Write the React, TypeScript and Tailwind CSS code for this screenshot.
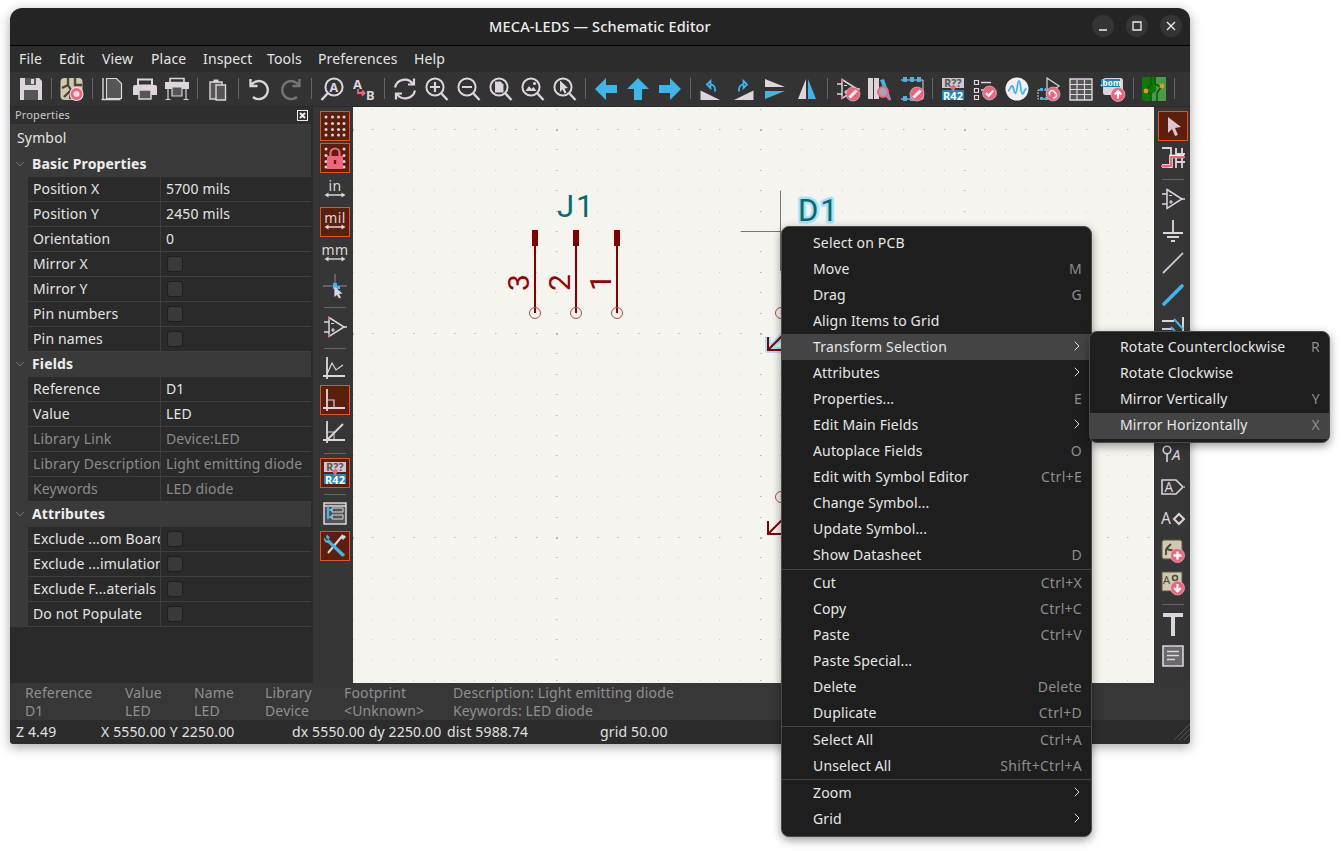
import React from 'react';
import { ChevronDown, ChevronRight } from 'lucide-react';

const L = '#ded4de';
const B = '#3eb6ea';
const P = '#f2637e';
const D = '#565656';

const Ico: React.FC<{ children: React.ReactNode }> = ({ children }) => (
  <svg width="24" height="24" viewBox="0 0 24 24" fill="none" className="shrink-0 overflow-visible">{children}</svg>
);

const Lens: React.FC<{ children?: React.ReactNode; flip?: boolean }> = ({ children, flip }) => (
  <Ico>
    <circle cx={flip ? 14 : 10} cy="10" r="8.6" stroke={L} strokeWidth="2" />
    <path d={flip ? 'M8 16L1.5 23' : 'M16 16L22.5 23'} stroke={L} strokeWidth="2.4" />
    {children}
  </Ico>
);

const Badge: React.FC<{ x?: number; y?: number; kind: 'pen' | 'check' | 'up' | 'link' | 'plus' | 'down' }> = ({ x = 17, y = 17, kind }) => (
  <g>
    <circle cx={x} cy={y} r="7" fill={P} stroke={L} strokeWidth="0.6" />
    {kind === 'pen' && <path d={`M${x - 3.5} ${y + 3.5}L${x + 3.5} ${y - 3.5}`} stroke="#fff" strokeWidth="3" />}
    {kind === 'check' && <path d={`M${x - 3.5} ${y}l2.6 2.8 4.6 -5`} stroke="#fff" strokeWidth="2.2" />}
    {kind === 'up' && <path d={`M${x} ${y + 4}v-7M${x - 3.4} ${y}l3.4 -3.4 3.4 3.4`} stroke="#fff" strokeWidth="2.2" />}
    {kind === 'down' && <path d={`M${x} ${y - 4}v7M${x - 3.4} ${y}l3.4 3.4 3.4 -3.4`} stroke="#fff" strokeWidth="2.2" />}
    {kind === 'plus' && <path d={`M${x - 4} ${y}h8M${x} ${y - 4}v8`} stroke="#fff" strokeWidth="2.4" />}
    {kind === 'link' && <path d={`M${x - 3} ${y + 1}a2.6 2.6 0 0 1 4 -3.4l2 2a2.6 2.6 0 0 1 -3 4`} stroke="#fff" strokeWidth="1.6" />}
  </g>
);

const OpAmp: React.FC<{ pink?: boolean }> = ({ pink }) => (
  <g stroke={L} strokeWidth="1.5">
    <path d="M6 2.5L21 12 6 21.5z" fill="none" />
    <path d="M1 7h5M1 17h5M21 12h3" />
    <path d="M8 8.5h3M8 15h4M10 13v4" strokeWidth="1.2" />
    {pink && <path d="M6 2v3M6 19v3" stroke={P} strokeWidth="1.6" />}
  </g>
);

const Anno = () => (
  <Ico>
    <rect x="1" y="1" width="22" height="10" fill="#cfc6cf" />
    <text x="12" y="10" fontSize="10.5" fontWeight="700" fill="#555" textAnchor="middle">R??</text>
    <rect x="1" y="13" width="22" height="10" fill="#1f87b8" />
    <text x="12" y="22.5" fontSize="11" fontWeight="700" fill="#fff" textAnchor="middle">R42</text>
    <path d="M8.5 9h7L12 15z" fill={P} />
  </Ico>
);

const top: Record<string, React.ReactNode> = {
  save: (
    <Ico>
      <path d="M1 1h19l3 3v19H1z" fill={L} />
      <rect x="6" y="1" width="11" height="7" fill={D} />
      <rect x="12" y="2" width="3" height="5" fill={L} />
      <rect x="5" y="13" width="14" height="10" fill={D} />
    </Ico>
  ),
  fields: (
    <Ico>
      <rect x="0.5" y="1" width="22" height="22" rx="4" fill="#d2c8ab" />
      <path d="M8 1v7l-6 3M8 8l3 5-7 7M15 1v7h7M11 13l-1 9" stroke="#4a4640" strokeWidth="2.4" />
      <circle cx="16.5" cy="17" r="7" fill="#e9e2e9" />
      <circle cx="16.5" cy="17" r="4.5" fill="none" stroke={P} strokeWidth="3" />
    </Ico>
  ),
  page: (
    <Ico>
      <path d="M5.5 1.5h10l5 5v15h-15z" fill={D} stroke={L} strokeWidth="1.2" />
      <path d="M2 1v21M.5 22.5h19" stroke={L} strokeWidth="1.4" />
    </Ico>
  ),
  print: (
    <Ico>
      <path d="M5 2.5h14v6H5z" stroke={L} strokeWidth="2" />
      <path d="M2 8h20a2 2 0 0 1 2 2v8h-24v-8a2 2 0 0 1 2 -2z" fill={L} />
      <path d="M6 13h12v9H6z" fill={D} stroke={L} strokeWidth="1.5" />
    </Ico>
  ),
  plot: (
    <Ico>
      <path d="M5 1.5h14v4H5z" stroke={L} strokeWidth="1.6" />
      <path d="M0 5h24v7H0z" fill={L} />
      <path d="M7 10h10v9H7z" fill={D} stroke={L} strokeWidth="1.2" />
      <path d="M3 12v10M21 12v10M0.5 22.5h5M18.5 22.5h5" stroke={L} strokeWidth="1.2" />
    </Ico>
  ),
  paste: (
    <Ico>
      <path d="M4 5h12v17H4z" fill={D} stroke={L} strokeWidth="1.4" />
      <path d="M7.5 2.5h5v3h-5z" fill={L} />
      <path d="M10 8h9.5v15H10z" fill={D} stroke={L} strokeWidth="1.4" />
    </Ico>
  ),
  undo: (
    <Ico>
      <path d="M3.5 2v7h7M4 8.5A9 9 0 1 1 6 20" stroke={L} strokeWidth="2.4" />
    </Ico>
  ),
  redo: (
    <Ico>
      <path d="M20.5 2v7h-7M20 8.5A9 9 0 1 0 18 20" stroke="#757575" strokeWidth="2.4" />
    </Ico>
  ),
  find: (
    <Lens flip>
      <text x="14" y="14.5" fontSize="12.5" fontWeight="700" fill={L} textAnchor="middle">A</text>
    </Lens>
  ),
  replace: (
    <Ico>
      <text x="1" y="12" fontSize="13" fontWeight="700" fill={L}>A</text>
      <text x="14" y="23" fontSize="13" fontWeight="700" fill={L}>B</text>
      <path d="M6 12v4h6M10 13.5l2.500 2.500-2.500 2.500" stroke={P} strokeWidth="1.8" />
    </Ico>
  ),
  refresh: (
    <Ico>
      <path d="M2 10.5A10 10 0 0 1 20 7M21 1.5v6h-6M22 13.5A10 10 0 0 1 4 17M3 22.5v-6h6" stroke={L} strokeWidth="2.2" />
    </Ico>
  ),
  zoomin: <Lens><path d="M5 10h10M10 5v10" stroke={L} strokeWidth="2.2" /></Lens>,
  zoomout: <Lens><path d="M5 10h10" stroke={L} strokeWidth="2.2" /></Lens>,
  zoomfit: <Lens><path d="M6 4.5h5.5l3 3v8H6z" fill={L} /></Lens>,
  zoomobj: <Lens><path d="M4.5 14l3.5 -5 2.5 3 2 -2 3 4z" fill={L} /><circle cx="13.5" cy="6.5" r="1.6" fill={L} /></Lens>,
  zoomsel: <Lens><path d="M7 3.5L15 11l-3.5 .5 2 4-2 1-2-4L7 15z" fill={L} /></Lens>,
  left: <Ico><path d="M1 12L12 1v7h11v8H12v7z" fill={B} /></Ico>,
  up: <Ico><path d="M12 1l11 11h-7v11H8V12H1z" fill={B} /></Ico>,
  right: <Ico><path d="M23 12L12 1v7H1v8h11v7z" fill={B} /></Ico>,
  rotccw: (
    <Ico>
      <path d="M1.500 13.500L21 23H1.500z" fill={L} />
      <path d="M8 7.500l3.500 -3.500v7zM11 7.500a4.500 4.500 0 0 1 5 5v2" stroke={B} strokeWidth="1.800" />
    </Ico>
  ),
  rotcw: (
    <Ico>
      <path d="M22.500 13.500V23H3z" fill={L} />
      <path d="M16 7.500L12.500 4v7zM13 7.500a4.500 4.500 0 0 0 -5 5v2" stroke={B} strokeWidth="1.800" />
    </Ico>
  ),
  mirv: (
    <Ico>
      <path d="M2 2l20 8H2z" fill={L} />
      <path d="M2 22l20-8H2z" fill={B} />
    </Ico>
  ),
  mirh: (
    <Ico>
      <path d="M11 2L3 22h8z" fill={L} />
      <path d="M13 2l8 20h-8z" fill={B} />
    </Ico>
  ),
  symedit: <Ico><OpAmp pink /><Badge kind="pen" /></Ico>,
  libbrowse: (
    <Ico>
      <path d="M0 1h5v21H0zM6 1h5v21H6z" fill={L} />
      <path d="M12 3l4 -1 7 20-3 1z" fill={B} />
      <circle cx="15" cy="15" r="5" fill="#a9a4a9" stroke={P} strokeWidth="2" />
      <path d="M18.5 19l4 4" stroke={P} strokeWidth="2" />
    </Ico>
  ),
  hierbus: (
    <Ico>
      <path d="M1 3h22v19H1" stroke={L} strokeWidth="1" />
      <path d="M3 0h4v5H3zM10 0h4v5h-4zM17 0h4v5h-4zM3 19h4v5H3zM10 19h4v5h-4z" fill={B} />
      <Badge kind="pen" />
    </Ico>
  ),
  annotate: <Anno />,
  erc: (
    <Ico>
      <path d="M1.5 3.5h4v4h-4zM1.5 11.5h4v4h-4zM1.5 18.5h4v4h-4z" stroke={L} strokeWidth="1.2" />
      <path d="M8 5.5h10M8 13h4" stroke={L} strokeWidth="1.4" />
      <Badge kind="check" y={16} x={16.5} />
    </Ico>
  ),
  sim: (
    <Ico>
      <circle cx="12" cy="12" r="11.5" fill="#f2f0f2" />
      <path d="M3 14c2 0 2-5 4-5s1.5 7 3.5 7 1.5-12 3.500-12 1.500 13 3.500 13 1-5 4-5" stroke={B} strokeWidth="1.8" />
    </Ico>
  ),
  assign: (
    <Ico>
      <path d="M10 1l12 8-12 8z" stroke={L} strokeWidth="1.2" />
      <path d="M1 13h14v9H1z" stroke={L} strokeWidth="1" strokeDasharray="2 1" />
      <path d="M3 11h3v3H3zM8 11h3v3H8zM3 20h3v3H3zM8 20h3v3H8z" fill={B} />
      <Badge kind="link" x={16} y={17} />
    </Ico>
  ),
  table: (
    <Ico>
      <path d="M1 2h22v21H1z" fill={D} stroke={L} strokeWidth="1.4" />
      <path d="M1 7.500h22M1 12.500h22M1 17.500h22M8 3v20M15.500 3v20" stroke={L} strokeWidth="1.2" />
    </Ico>
  ),
  bom: (
    <Ico>
      <rect x="2" y="1" width="20" height="17" rx="2.500" fill={L} />
      <rect x="0" y="2" width="19" height="8" fill="#1f87b8" />
      <text x="9.500" y="8.800" fontSize="8" fontWeight="700" fill="#fff" textAnchor="middle">.bom</text>
      <Badge kind="up" y={17.500} />
    </Ico>
  ),
  pcb: (
    <Ico>
      <rect x="0" y="0" width="24" height="24" rx="2.500" fill="#0a7a0a" />
      <path d="M14 0h10v24H10l-2-6 6-4z" fill="#4b9a48" />
      <path d="M9 0v8l-5 6M13 0v7l6 3M4 14l5 3v7M15 24v-8l4-6" stroke="#0c5a0c" strokeWidth="1.6" />
      <circle cx="4" cy="14" r="2.400" fill="#e39a1f" />
      <circle cx="20" cy="9" r="2.400" fill="#e39a1f" />
    </Ico>
  ),
};

const toolbar: string[][] = [
  ['save'], ['fields'], ['page', 'print', 'plot'], ['paste'], ['undo', 'redo'], ['find', 'replace'],
  ['refresh', 'zoomin', 'zoomout', 'zoomfit', 'zoomobj', 'zoomsel'], ['left', 'up', 'right'],
  ['rotccw', 'rotcw', 'mirv', 'mirh'], ['symedit', 'libbrowse', 'hierbus'],
  ['annotate', 'erc', 'sim', 'assign', 'table', 'bom'], ['pcb'],
];

const menus = [
  ['File', 'w-[40px]'], ['Edit', 'w-[43px]'], ['View', 'w-[49px]'], ['Place', 'w-[52px]'],
  ['Inspect', 'w-[64px]'], ['Tools', 'w-[51px]'], ['Preferences', 'w-[96px]'], ['Help', 'w-[50px]'],
];

const Tool: React.FC<{ on?: boolean; children?: React.ReactNode }> = ({ on, children }) => (
  <div className={`w-[30px] h-[30px] mb-[2px] flex items-center justify-center border ${on ? 'bg-[#5b1f0b] border-[#e4531f]' : 'border-transparent'}`}>
    {children}
  </div>
);

const VSep = () => (
  <div className="h-[9px] w-[30px] flex items-center justify-center">
    <div className="w-[22px] h-px bg-[#666]" />
  </div>
);

const Unit: React.FC<{ t: string }> = ({ t }) => (
  <Ico>
    <text x="12" y="12.500" fontSize="14" letterSpacing="0.4" fill={L} textAnchor="middle">{t}</text>
    <path d="M4 17h16" stroke={L} strokeWidth="1.400" />
    <path d="M1.500 17l4-2.500v5zM22.500 17l-4-2.500v5z" fill={L} />
  </Ico>
);

const LeftBar = () => (
  <div className="w-[40px] bg-[#363636] flex flex-col items-center pt-[4px] pl-[4px] shrink-0">
    <Tool on>
      <Ico>
        {[3, 9.500, 15.500, 21].map((y) => [3, 9.500, 15.500, 21].map((x) => <circle key={`${x}-${y}`} cx={x} cy={y} r="1.500" fill={L} />))}
      </Ico>
    </Tool>
    <Tool on>
      <Ico>
        {[3, 21].map((x) => [3, 9.500, 15.500, 21].map((y) => <circle key={`${x}-${y}`} cx={x} cy={y} r="1.500" fill={L} />))}
        <path d="M7.500 10V7a4.500 4.500 0 0 1 9 0v3" stroke={P} strokeWidth="2.200" />
        <path d="M4 10h16v13H4z" fill={P} />
        <path d="M12 14v4" stroke="#5b1f0b" strokeWidth="2.400" />
      </Ico>
    </Tool>
    <Tool><Unit t="in" /></Tool>
    <Tool on><Unit t="mil" /></Tool>
    <Tool><Unit t="mm" /></Tool>
    <Tool>
      <Ico>
        <path d="M12 0v22M0 12h24" stroke="#8f8a8f" strokeWidth="1" />
        <path d="M10 9h4v3h3v3h-3v0h-4v-3H7V12h3z" fill={B} />
        <path d="M11.500 12.500l8 7-3.500 .5 2 3.500-2 1-2-3.500-2.500 2z" fill={L} />
      </Ico>
    </Tool>
    <VSep />
    <Tool><Ico><OpAmp pink /></Ico></Tool>
    <VSep />
    <Tool>
      <Ico>
        <path d="M4 1v22M0 20h22" stroke={L} strokeWidth="1.800" />
        <path d="M4 18L9 7l4 7 7-5" stroke={L} strokeWidth="1.200" />
      </Ico>
    </Tool>
    <Tool on>
      <Ico>
        <path d="M4 1v22M0 20h22" stroke={L} strokeWidth="1.800" />
        <path d="M4 12h7v8" stroke={L} strokeWidth="1.200" />
      </Ico>
    </Tool>
    <Tool>
      <Ico>
        <path d="M4 1v22M0 20h22M3 21L20 4" stroke={L} strokeWidth="1.800" />
        <path d="M4 12h7v8" stroke={L} strokeWidth="1" />
      </Ico>
    </Tool>
    <VSep />
    <Tool on><Anno /></Tool>
    <VSep />
    <Tool>
      <Ico>
        <path d="M1 1h22v21H1z" stroke={L} strokeWidth="1.500" fill={D} />
        <path d="M1 4h22" stroke={L} strokeWidth="1.500" />
        <path d="M5 4v13M5 8h4M5 15h4" stroke={B} strokeWidth="2" />
        <path d="M9 6h11v4H9zM9 13h11v4H9z" stroke={L} strokeWidth="1" />
      </Ico>
    </Tool>
    <Tool on>
      <Ico>
        <path d="M20 1L5 19" stroke={L} strokeWidth="2" />
        <path d="M23 3l-3 3-2-2 3-3z" fill={L} />
        <path d="M3 2.500c0 1.500 1 2.500 3 3l1 1 15 14c-.5 1.500-1.500 2-3 2L5 9C2 9 .5 6 1 3.500l3 3 3-3-3-3z" fill={B} />
      </Ico>
    </Tool>
  </div>
);

const RightBar = () => (
  <div className="w-[36px] bg-[#363636] flex flex-col items-center pt-[4px] pl-[2px] shrink-0">
    <Tool on>
      <Ico><path d="M7 3l13 10-6 1 3 7-3 1-3-7-4 4z" fill="#d9c4cf" /></Ico>
    </Tool>
    <Tool>
      <Ico>
        <path d="M1 2h9v20M15 2v20M21 2v20M15 8h9M15 16h9" stroke={L} strokeWidth="1.800" />
        <path d="M1 20h9v-9.500h13" stroke="#fff" strokeWidth="3.500" />
        <path d="M0 20h10v-9h14" stroke={P} strokeWidth="2.200" />
      </Ico>
    </Tool>
    <VSep />
    <Tool><Ico><OpAmp /></Ico></Tool>
    <Tool>
      <Ico>
        <path d="M12 1v13M2 14h20M6 18h12M10 22h4" stroke={L} strokeWidth="1.800" />
      </Ico>
    </Tool>
    <Tool><Ico><path d="M2 22L22 2" stroke="#cdc2cd" strokeWidth="1.800" /></Ico></Tool>
    <Tool><Ico><path d="M3 21L21 3" stroke={B} strokeWidth="3.600" strokeLinecap="round" /></Ico></Tool>
    <Tool>
      <Ico>
        <path d="M1 6h12M1 14h12M22 2v20" stroke={L} strokeWidth="2" />
        <path d="M13 4l9 10M10 12l9 10" stroke={B} strokeWidth="2" />
      </Ico>
    </Tool>
    <Tool />
    <Tool />
    <Tool />
    <Tool>
      <Ico>
        <circle cx="6" cy="7" r="3.800" stroke={L} strokeWidth="1.600" />
        <path d="M6 11v8" stroke={L} strokeWidth="1.600" />
        <text x="11" y="17" fontSize="15" fontStyle="italic" fill={L}>A</text>
      </Ico>
    </Tool>
    <Tool>
      <Ico>
        <path d="M1 5h14l7 7-7 7H1z" stroke={L} strokeWidth="1.600" />
        <text x="3.500" y="17" fontSize="13.500" fill={L}>A</text>
        <path d="M22 11h2v2h-2z" fill={B} />
      </Ico>
    </Tool>
    <Tool>
      <Ico>
        <text x="0" y="17" fontSize="15.500" fill={L}>A</text>
        <path d="M18 7l5 5-5 5-5-5z" stroke={L} strokeWidth="2" />
      </Ico>
    </Tool>
    <Tool>
      <Ico>
        <rect x="1" y="1" width="20" height="19" rx="2" fill="#d2c8ab" stroke="#5a5650" />
        <path d="M5 10l5-5M5 10v6M5 10l9 2" stroke="#4a4640" strokeWidth="1.800" />
        <Badge kind="plus" y={16.500} x={16.500} />
      </Ico>
    </Tool>
    <Tool>
      <Ico>
        <rect x="1" y="1" width="20" height="19" fill="#d2c8ab" stroke="#5a5650" />
        <text x="2" y="13" fontSize="11" fill="#4a4640">A</text>
        <circle cx="14" cy="7" r="2.500" stroke="#4a4640" strokeWidth="1.500" />
        <Badge kind="down" y={17} x={16.500} />
      </Ico>
    </Tool>
    <VSep />
    <Tool>
      <Ico><path d="M2 1h20v4h-8v19h-4V5H2z" fill={L} /></Ico>
    </Tool>
    <Tool>
      <Ico>
        <path d="M2 2h20v20H2z" stroke={L} strokeWidth="1.600" fill="#6a6a6a" />
        <path d="M6 7.500h12M6 11.500h12M6 15.500h8" stroke={L} strokeWidth="1.500" />
      </Ico>
    </Tool>
  </div>
);

const Cat: React.FC<{ t: string }> = ({ t }) => (
  <div className="h-[25px] flex items-center pb-[2px] bg-[#3a3a3a] text-[#eee] font-bold">
    <div className="w-[14px] flex justify-end"><ChevronDown size={14} strokeWidth={1} className="text-[#aaa] mr-[-3px]" /></div>
    <span className="ml-[8px]">{t}</span>
  </div>
);

const Row: React.FC<{ k: string; v?: string; box?: boolean; dim?: boolean }> = ({ k, v, box, dim }) => (
  <div className={`h-[25px] flex ${dim ? 'text-[#8b8b8b]' : 'text-[#e4e4e4]'}`}>
    <div className="w-[18px] bg-[#3a3a3a] shrink-0" />
    <div className="w-[133px] shrink-0 flex items-center pb-[2px] pl-[5px] overflow-hidden whitespace-nowrap border-r border-b border-[#3e3e3e]">{k}</div>
    <div className={`flex-1 flex items-center pl-[5px] border-b border-[#3e3e3e] ${box ? '' : 'pb-[2px]'}`}>
      {box ? <div className="w-[16px] h-[16px] ml-[1px] rounded-[3px] bg-[#393939] border border-[#1e1e1e]" /> : v}
    </div>
  </div>
);

const PropsPanel = () => (
  <div className="w-[303px] bg-[#2a2a2a] shrink-0 pr-[2px] flex flex-col">
    <div className="h-[17px] flex items-center justify-between pl-[5px] pr-[3px] text-[11px] text-[#c8c8c8] bg-[#2e2e2e]">
      Properties
      <svg width="11" height="11" viewBox="0 0 11 11"><rect x=".5" y=".5" width="10" height="10" fill="none" stroke="#eee" /><path d="M3 3l5 5M8 3l-5 5" stroke="#eee" strokeWidth="2" /></svg>
    </div>
    <div className="h-[28px] flex items-center pb-[2px] pl-[7px] bg-[#3a3a3a] text-[#e4e4e4]">Symbol</div>
    <Cat t="Basic Properties" />
    <Row k="Position X" v="5700 mils" />
    <Row k="Position Y" v="2450 mils" />
    <Row k="Orientation" v="0" />
    <Row k="Mirror X" box />
    <Row k="Mirror Y" box />
    <Row k="Pin numbers" box />
    <Row k="Pin names" box />
    <Cat t="Fields" />
    <Row k="Reference" v="D1" />
    <Row k="Value" v="LED" />
    <Row k="Library Link" v="Device:LED" dim />
    <Row k="Library Description" v="Light emitting diode" dim />
    <Row k="Keywords" v="LED diode" dim />
    <Cat t="Attributes" />
    <Row k="Exclude ...om Board" box />
    <Row k="Exclude ...imulation" box />
    <Row k="Exclude F...aterials" box />
    <Row k="Do not Populate" box />
  </div>
);

const gridDots: { x: number; y: number; major: boolean; cross: boolean }[] = [];
for (let i = 0; i < 10; i++) {
  for (let j = 0; j < 10; j++) {
    gridDots.push({ x: Math.round(i * 20.4), y: Math.round(j * 20.4), major: i === 0 || j === 0, cross: i === 0 && j === 0 });
  }
}

const Canvas = () => (
  <div className="flex-1 bg-[#f5f4ef]">
    <svg width="801" height="576" viewBox="353 107 801 576" className="block">
      <defs>
        <pattern id="grid" x="352" y="129" width="204" height="204" patternUnits="userSpaceOnUse">
          {gridDots.map((d) =>
            d.cross ? (
              <rect key={`${d.x}-${d.y}`} x={d.x - 1} y={d.y - 1} width="3" height="3" fill="#b5b3ae" />
            ) : (
              <rect key={`${d.x}-${d.y}`} x={d.x} y={d.y} width={d.major ? 1.500 : 1} height="1" fill={d.major ? '#b9b7b1' : '#cfcdc7'} />
            ),
          )}
        </pattern>
      </defs>
      <rect x="353" y="107" width="801" height="576" fill="url(#grid)" />
      <text x="557" y="217" fontSize="31" letterSpacing="2" fill="#0b6a6e" fontFamily="Roboto, sans-serif">J1</text>
      <text x="798" y="221" fontSize="31" letterSpacing="2" fill="#0b6a6e" stroke="#a9e3fb" strokeWidth="5" paintOrder="stroke" strokeLinejoin="round" fontFamily="Roboto, sans-serif">D1</text>
      {[535, 576, 617].map((x, i) => (
        <g key={x}>
          <rect x={x - 3} y="230" width="6" height="16" fill="#840000" />
          <path d={`M${x} 246V313`} stroke="#840000" strokeWidth="2" />
          <circle cx={x} cy="313" r="5.500" fill="none" stroke="#b04a4a" />
          <text transform={`translate(${x - 6} 291) rotate(-90)`} fontSize="30" fill="#960000" fontFamily="Roboto, sans-serif">{3 - i}</text>
        </g>
      ))}
      <path d="M780.500 191V271M741 231.500H790" stroke="#777" />
      <circle cx="781" cy="313" r="5.500" fill="none" stroke="#b04a4a" />
      <circle cx="781" cy="497" r="5.500" fill="none" stroke="#b04a4a" />
      <path d="M768 337v13h16M768 350l16-16" stroke="#a9e3fb" strokeWidth="6" fill="none" strokeLinejoin="round" />
      <path d="M768 337v13h16M768 350l16-16" stroke="#840000" strokeWidth="2" fill="none" />
      <path d="M768 521v13h16M768 534l16-16" stroke="#840000" strokeWidth="2" fill="none" />
    </svg>
  </div>
);

const MsgCol: React.FC<{ w: string; a: string; b: string }> = ({ w, a, b }) => (
  <div className={`${w} shrink-0 leading-[18px] whitespace-nowrap`}>
    <div>{a}</div>
    <div>{b}</div>
  </div>
);

type Item = { t?: string; k?: string; sub?: boolean; on?: boolean };

const MenuRow: React.FC<{ it: Item; pad: string }> = ({ it, pad }) => (
  <div className={`h-[26px] flex items-center justify-between ${pad} pr-[9px] whitespace-nowrap ${it.on ? 'bg-[#444]' : ''}`}>
    <span className="text-[#e6e6e6]">{it.t}</span>
    {it.k && <span className="text-[#8d8d8d] tracking-[0.3px]">{it.k}</span>}
    {it.sub && <ChevronRight size={16} strokeWidth={1.500} className="text-[#ddd] mr-[-3px]" />}
  </div>
);

const mainMenu: Item[][] = [
  [
    { t: 'Select on PCB' }, { t: 'Move', k: 'M' }, { t: 'Drag', k: 'G' }, { t: 'Align Items to Grid' },
    { t: 'Transform Selection', sub: true, on: true }, { t: 'Attributes', sub: true }, { t: 'Properties...', k: 'E' },
    { t: 'Edit Main Fields', sub: true }, { t: 'Autoplace Fields', k: 'O' }, { t: 'Edit with Symbol Editor', k: 'Ctrl+E' },
    { t: 'Change Symbol...' }, { t: 'Update Symbol...' }, { t: 'Show Datasheet', k: 'D' },
  ],
  [
    { t: 'Cut', k: 'Ctrl+X' }, { t: 'Copy', k: 'Ctrl+C' }, { t: 'Paste', k: 'Ctrl+V' }, { t: 'Paste Special...' },
    { t: 'Delete', k: 'Delete' }, { t: 'Duplicate', k: 'Ctrl+D' },
  ],
  [{ t: 'Select All', k: 'Ctrl+A' }, { t: 'Unselect All', k: 'Shift+Ctrl+A' }],
  [{ t: 'Zoom', sub: true }, { t: 'Grid', sub: true }],
];

const subMenu: Item[] = [
  { t: 'Rotate Counterclockwise', k: 'R' }, { t: 'Rotate Clockwise' }, { t: 'Mirror Vertically', k: 'Y' },
  { t: 'Mirror Horizontally', k: 'X', on: true },
];

const App: React.FC = () => (
  <div className="relative w-[1341px] h-[851px] overflow-hidden bg-white text-[14px] tracking-[0.15px] font-['Noto_Sans','Open_Sans',sans-serif]">
    <div className="ml-[10px] mt-[8px] w-[1180px] h-[736px] flex flex-col rounded-t-[12px] rounded-b-[3px] overflow-hidden shadow-[0_3px_12px_rgba(0,0,0,0.35)]">
      {/* Title bar */}
      <div className="h-[38px] shrink-0 bg-[#242424] border-b border-black flex items-center relative">
        <div className="flex-1 text-center font-medium text-[14.5px] text-[#eee]">MECA-LEDS — Schematic Editor</div>
        <div className="absolute right-[8px] top-[7px] flex gap-[12px]">
          {['M7 15h8', 'M7 7h8v8H7z', 'M7 7l8 8M15 7l-8 8'].map((d) => (
            <div key={d} className="w-[22px] h-[22px] rounded-full bg-[#353535]">
              <svg width="22" height="22" viewBox="0 0 22 22"><path d={d} fill="none" stroke="#eee" strokeWidth="1.300" /></svg>
            </div>
          ))}
        </div>
      </div>

      {/* Menu bar */}
      <div className="h-[26px] shrink-0 bg-[#2c2c2c] flex items-center pb-[2px] pl-[1px] text-[#e4e4e4]">
        {menus.map(([t, w]) => (
          <div key={t} className={`${w} pl-[8px]`}>{t}</div>
        ))}
      </div>

      {/* Main toolbar */}
      <div className="h-[35px] shrink-0 bg-[#333] flex items-center gap-2 pl-[9px] pb-[1px] border-b border-[#2a2a2a]">
        {toolbar.map((group) => (
          <React.Fragment key={group[0]}>
            {group.map((name) => <React.Fragment key={name}>{top[name]}</React.Fragment>)}
            <div className="w-px h-[21px] bg-[#666]" />
          </React.Fragment>
        ))}
      </div>

      <div className="flex h-[576px] shrink-0">
        <PropsPanel />
        <LeftBar />
        <Canvas />
        <RightBar />
      </div>

      {/* Message panel */}
      <div className="h-[37px] shrink-0 bg-[#373737] flex items-center pl-[15px] text-[#8f8f8f]">
        <MsgCol w="w-[100px]" a="Reference" b="D1" />
        <MsgCol w="w-[69px]" a="Value" b="LED" />
        <MsgCol w="w-[71px]" a="Name" b="LED" />
        <MsgCol w="w-[79px]" a="Library" b="Device" />
        <MsgCol w="w-[109px]" a="Footprint" b="<Unknown>" />
        <MsgCol w="w-[300px]" a="Description: Light emitting diode" b="Keywords: LED diode" />
      </div>

      {/* Status bar */}
      <div className="h-[24px] shrink-0 bg-[#2c2c2c] flex items-center pb-[2px] pl-[6px] text-[#e0e0e0] whitespace-nowrap">
        <div className="w-[85px]">Z 4.49</div>
        <div className="w-[191px]">X 5550.00 Y 2250.00</div>
        <div className="w-[155px]">dx 5550.00 dy 2250.00</div>
        <div className="w-[153px]">dist 5988.74</div>
        <div>grid 50.00</div>
        <svg width="18" height="18" viewBox="0 0 18 18" className="ml-auto">
          <path d="M18 2L2 18M18 7L7 18M18 12L12 18" stroke="#555" />
        </svg>
      </div>
    </div>

    {/* Context menu */}
    <div className="absolute left-[781px] top-[226px] w-[311px] h-[611px] py-[3px] bg-[#1e1e1e] rounded-[8px] border border-[#4a4a4a] shadow-[0_3px_10px_rgba(0,0,0,0.4)]">
      {mainMenu.map((sec, i) => (
        <div key={i} className={i > 0 ? 'border-t border-[#444]' : 'pb-[1px]'}>
          {sec.map((it) => <MenuRow key={it.t} it={it} pad="pl-[31px] pb-[2px]" />)}
        </div>
      ))}
    </div>

    {/* Transform submenu */}
    <div className="absolute left-[1089px] top-[331px] w-[241px] h-[112px] py-[3px] bg-[#1e1e1e] rounded-[8px] border border-[#4a4a4a] shadow-[0_3px_10px_rgba(0,0,0,0.4)]">
      {subMenu.map((it) => <MenuRow key={it.t} it={it} pad="pl-[30px] pb-[3px]" />)}
    </div>
  </div>
);

export default App;
